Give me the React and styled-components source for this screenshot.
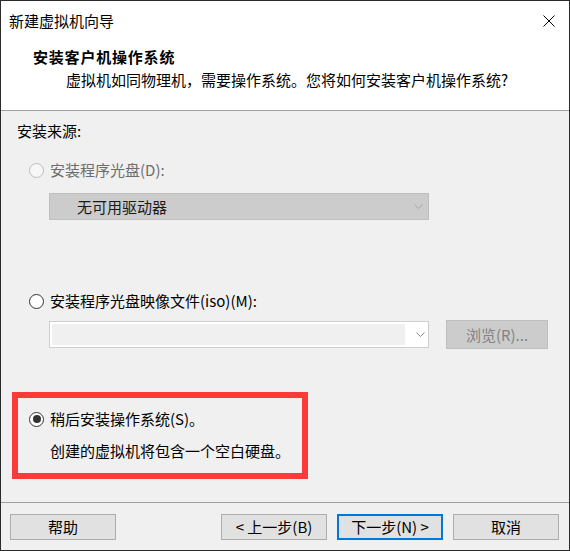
import styled, { createGlobalStyle } from "styled-components";

const GlobalStyle = createGlobalStyle`
  html, body {
    margin: 0;
    padding: 0;
    background: #f0f0f0;
  }
  * {
    box-sizing: border-box;
  }
`;

const Window = styled.div`
  width: 570px;
  height: 551px;
  border: 1px solid #2b2b2b;
  background: #f0f0f0;
  display: flex;
  flex-direction: column;
  font-family: "Noto Sans CJK SC", "Noto Sans", sans-serif;
  font-size: 15px;
  color: #000;
`;

const Header = styled.div`
  height: 110px;
  background: #fff;
  border-bottom: 1px solid #a0a0a0;
  display: flex;
  flex-direction: column;
`;

const TitleBar = styled.div`
  height: 40px;
  display: flex;
  align-items: center;
  justify-content: space-between;
  padding: 0 14px 0 8px;
  line-height: 20px;
`;

const CloseIcon = styled.svg`
  width: 12px;
  height: 12px;
  display: block;
`;

const Heading = styled.div`
  margin-top: 6px;
  padding-left: 32px;
  line-height: 20px;
  font-weight: bold;
  letter-spacing: 0.8px;
`;

const Subtitle = styled.div`
  margin-top: 3px;
  padding-left: 65px;
  line-height: 20px;
`;

const Content = styled.div`
  height: 392px;
  border-bottom: 1px solid #a0a0a0;
  display: flex;
  flex-direction: column;
  align-items: flex-start;
`;

const SourceLabel = styled.div`
  margin-top: 10px;
  padding-left: 16px;
  line-height: 20px;
`;

const OptionRow = styled.label`
  display: flex;
  align-items: center;
  gap: 6px;
  height: 20px;
  line-height: 20px;
  margin-top: ${({ $top }) => $top}px;
  margin-left: ${({ $left }) => $left}px;
  color: ${({ $disabled }) => ($disabled ? "#6d6d6d" : "#000")};
`;

const Radio = styled.span`
  width: 15px;
  height: 15px;
  border-radius: 50%;
  border: 1px solid ${({ $disabled }) => ($disabled ? "#bcbcbc" : "#333")};
  background: ${({ $disabled }) => ($disabled ? "#f7f7f7" : "#fff")};
  display: flex;
  align-items: center;
  justify-content: center;

  &::after {
    content: "";
    width: 8px;
    height: 8px;
    border-radius: 50%;
    background: #333;
    display: ${({ $checked }) => ($checked ? "block" : "none")};
  }
`;

const DriveSelect = styled.div`
  margin-top: 13px;
  margin-left: 48px;
  width: 380px;
  height: 27px;
  background: #cccccc;
  border: 1px solid #bfbfbf;
  display: flex;
  align-items: center;
  justify-content: space-between;
  padding: 0 5px 0 27px;
  line-height: 20px;
  color: #1a1a1a;
`;

const Chevron = styled.svg`
  width: 9px;
  height: 5px;
  display: block;
  flex: none;
`;

const IsoRow = styled.div`
  margin-top: 9px;
  margin-left: 48px;
  display: flex;
  align-items: center;
  gap: 17px;
`;

const IsoSelect = styled.div`
  width: 380px;
  height: 27px;
  background: #fff;
  border: 1px solid #cfcfcf;
  padding: 2px 3px 2px 2px;
  display: flex;
  align-items: center;
  justify-content: space-between;
`;

const IsoField = styled.div`
  width: 353px;
  height: 21px;
  background: #f0f0f0;
`;

const DisabledButton = styled.button`
  width: 102px;
  height: 29px;
  background: #cccccc;
  border: 1px solid #bfbfbf;
  color: #838383;
  font: inherit;
  line-height: 20px;
  padding: 0;
`;

const Highlight = styled.div`
  margin-top: 43px;
  margin-left: 11px;
  width: 296px;
  height: 87px;
  border: 6px solid #fc3a3a;
  padding-top: 11px;
  display: flex;
  flex-direction: column;
`;

const Note = styled.div`
  margin-top: 12px;
  padding-left: 32px;
  line-height: 20px;
`;

const Footer = styled.div`
  flex: 1;
  display: flex;
  align-items: flex-start;
  padding: 11px 10px 0 9px;
  gap: 10px;
`;

const Button = styled.button`
  width: 106px;
  height: 26px;
  background: #e1e1e1;
  border: ${({ $primary }) => ($primary ? "2px solid #0078d7" : "1px solid #adadad")};
  font: inherit;
  color: #000;
  line-height: 20px;
  padding: 0;
  margin-left: ${({ $push }) => ($push ? "auto" : "0")};
`;

const ArrowDown = ({ color }) => (
  <Chevron viewBox="0 0 9 5">
    <polyline points="0.5,0.5 4.5,4.5 8.5,0.5" fill="none" stroke={color} strokeWidth="1" />
  </Chevron>
);

export default function App() {
  return (
    <>
      <GlobalStyle />
      <Window>
        <Header>
          <TitleBar>
            <span>新建虚拟机向导</span>
            <CloseIcon viewBox="0 0 12 12">
              <path d="M0.5 0.5 L11.5 11.5 M11.5 0.5 L0.5 11.5" stroke="#000" strokeWidth="1" />
            </CloseIcon>
          </TitleBar>
          <Heading>安装客户机操作系统</Heading>
          <Subtitle>虚拟机如同物理机，需要操作系统。您将如何安装客户机操作系统?</Subtitle>
        </Header>

        <Content>
          <SourceLabel>安装来源:</SourceLabel>

          <OptionRow $top={19} $left={28} $disabled>
            <Radio $disabled />
            安装程序光盘(D):
          </OptionRow>
          <DriveSelect>
            <span>无可用驱动器</span>
            <ArrowDown color="#a8a8a8" />
          </DriveSelect>

          <OptionRow $top={71} $left={28}>
            <Radio />
            安装程序光盘映像文件(iso)(M):
          </OptionRow>
          <IsoRow>
            <IsoSelect>
              <IsoField />
              <ArrowDown color="#8a8a8a" />
            </IsoSelect>
            <DisabledButton disabled>浏览(R)...</DisabledButton>
          </IsoRow>

          <Highlight>
            <OptionRow $top={0} $left={11}>
              <Radio $checked />
              稍后安装操作系统(S)。
            </OptionRow>
            <Note>创建的虚拟机将包含一个空白硬盘。</Note>
          </Highlight>
        </Content>

        <Footer>
          <Button>帮助</Button>
          <Button $push>&lt; 上一步(B)</Button>
          <Button $primary>下一步(N) &gt;</Button>
          <Button>取消</Button>
        </Footer>
      </Window>
    </>
  );
}
